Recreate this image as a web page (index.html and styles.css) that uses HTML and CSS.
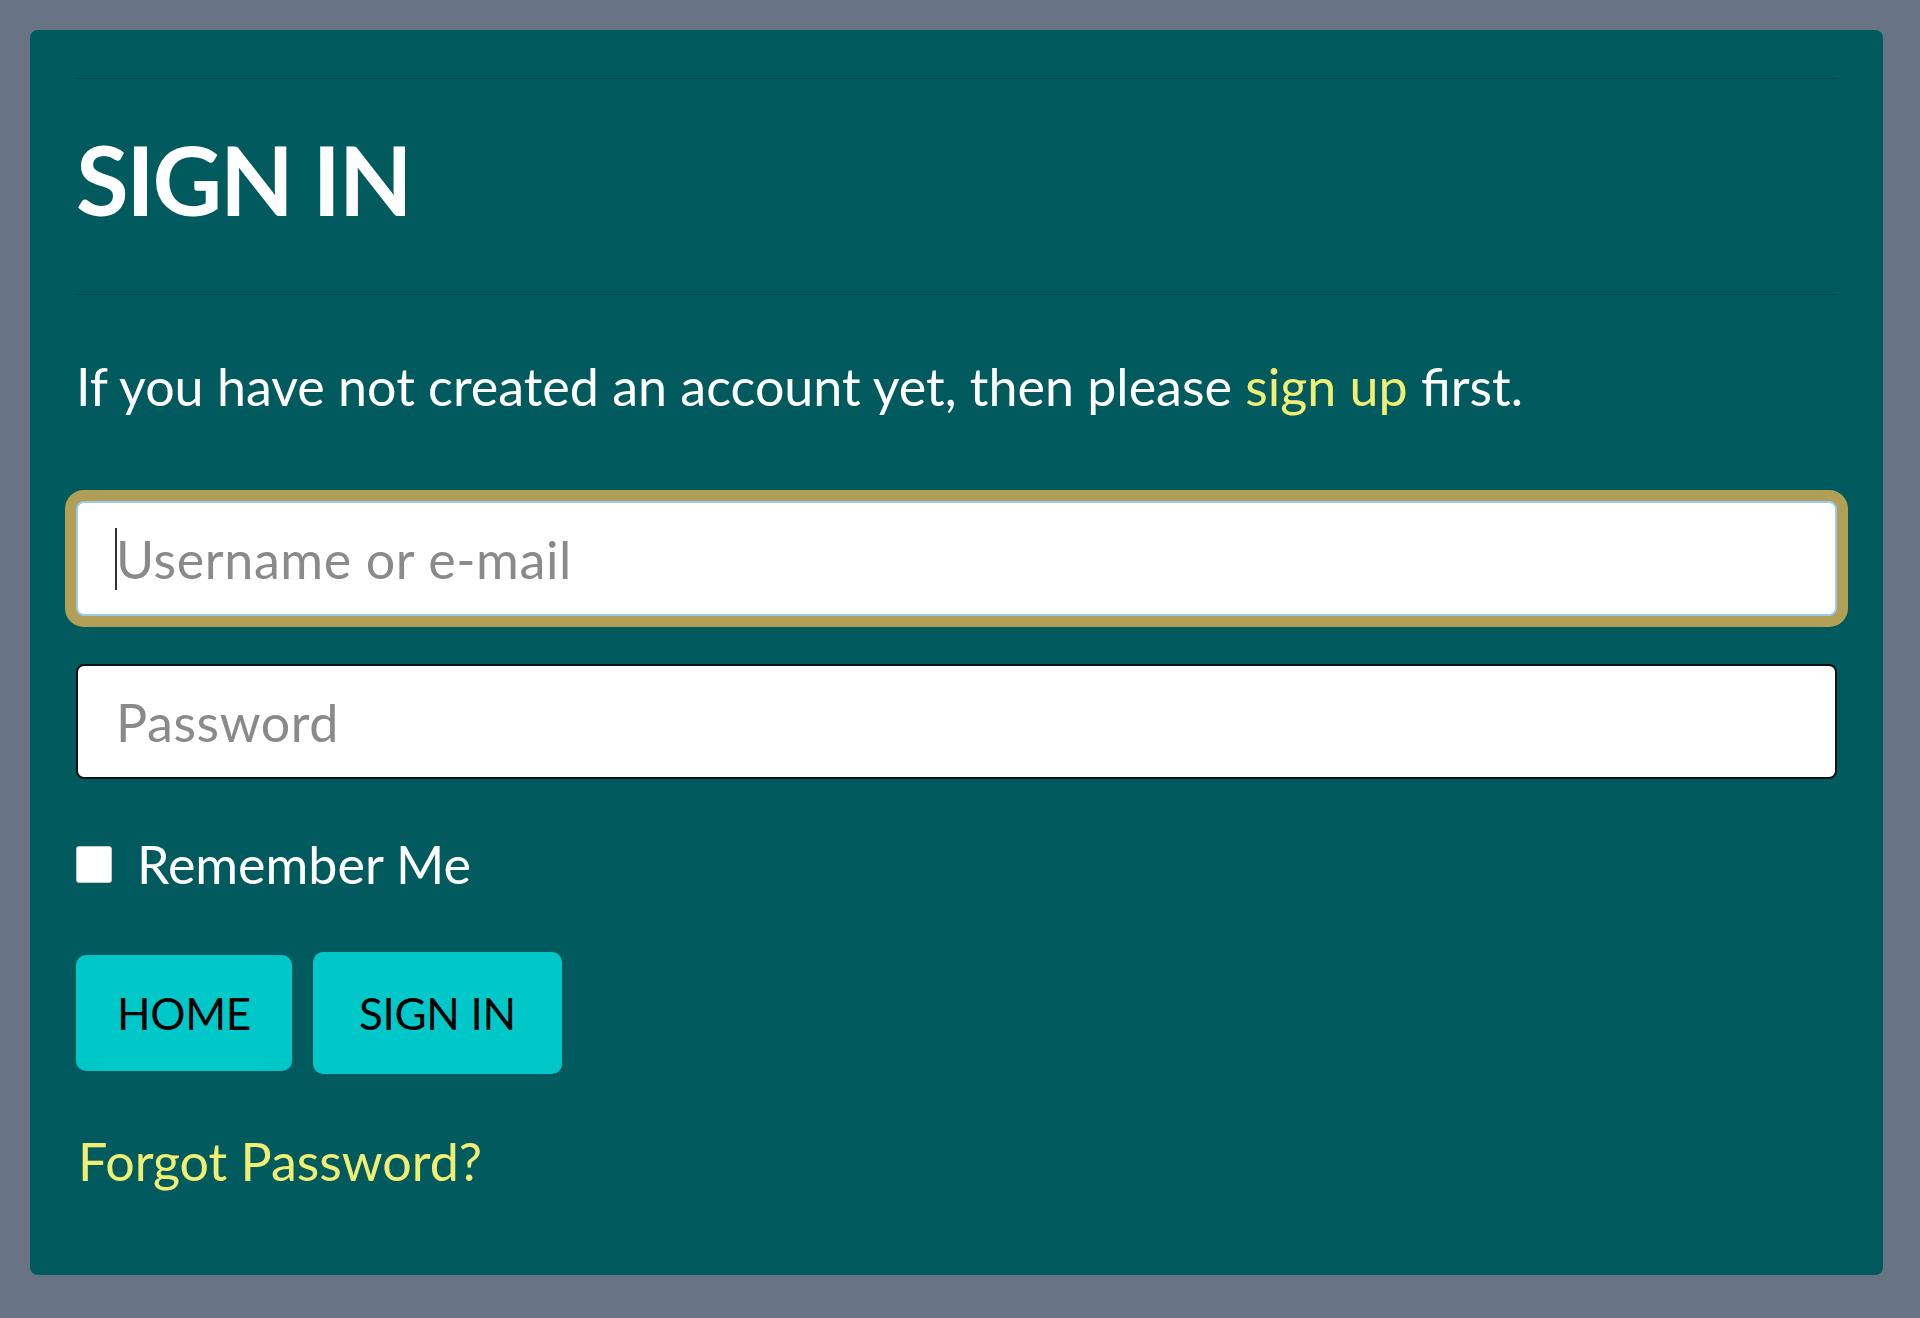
FILE: index.html
```html
<!DOCTYPE html>
<html lang="en">
<head>
<meta charset="utf-8">
<title>Sign In</title>
<link rel="stylesheet" href="styles.css">
</head>
<body>
<main class="card">
  <hr class="rule rule-top">
  <h1 class="title">SIGN IN</h1>
  <hr class="rule rule-bottom">
  <p class="intro">If you have not created an account yet, then please <a href="#" class="link">sign up</a> first.</p>
  <form class="form">
    <div class="field field-focused">
      <input class="input input-focused" type="text" placeholder="Username or e-mail">
      <span class="caret"></span>
    </div>
    <div class="field">
      <input class="input" type="password" placeholder="Password">
    </div>
    <label class="remember">
      <input type="checkbox" class="check">
      <span>Remember Me</span>
    </label>
    <div class="actions">
      <a href="#" class="btn btn-home">HOME</a>
      <button type="button" class="btn btn-signin">SIGN IN</button>
    </div>
    <a href="#" class="link forgot">Forgot Password?</a>
  </form>
</main>
</body>
</html>
```

FILE: styles.css
```css
* { box-sizing: border-box; }

html, body {
  margin: 0;
  padding: 0;
}

body {
  background: #687383;
  padding: 30px 37px 43px 30px;
  font-family: Lato, "Open Sans", sans-serif;
  min-height: 1318px;
}

.card {
  background: #005a5e;
  border-radius: 8px;
  padding: 48px 46px 84px 46px;
  color: #ffffff;
}

.rule {
  border: 0;
  height: 1px;
  margin: 0;
  background: #004a4e;
}

.title {
  margin: 42px 0 58px 0;
  font-size: 96px;
  line-height: 1.2;
  font-weight: 700;
  letter-spacing: -2.3px;
}

.intro {
  margin: 61px 0 0 0;
  font-size: 52px;
  line-height: 60px;
  letter-spacing: 0;
}

.link {
  color: #f0ef74;
  text-decoration: none;
}

.form {
  margin-top: 85px;
  display: flex;
  flex-direction: column;
  align-items: flex-start;
}

.field {
  position: relative;
  width: 100%;
}

.field + .field {
  margin-top: 48px;
}

.input {
  display: block;
  width: 100%;
  height: 115px;
  border: 2px solid #111111;
  border-radius: 8px;
  background: #ffffff;
  padding: 0 38px;
  font-family: Lato, "Open Sans", sans-serif;
  font-size: 52px;
  letter-spacing: 0.6px;
  color: #222;
  outline: none;
}

.input::placeholder {
  color: #8a8a8a;
}

.input-focused {
  border: 2px solid #9cc8f2;
  box-shadow: 0 0 0 11px #b09f55;
}

.caret {
  position: absolute;
  left: 39px;
  top: 27px;
  width: 2px;
  height: 62px;
  background: #333333;
}

.remember {
  margin-top: 55px;
  display: flex;
  align-items: center;
  gap: 25px;
  font-size: 52px;
  line-height: 60px;
  letter-spacing: 0;
  color: #ffffff;
}

.check {
  appearance: none;
  -webkit-appearance: none;
  margin: 0;
  width: 36px;
  height: 37px;
  background: #ffffff;
  border: 1px solid #c8c8c8;
  border-radius: 3px;
}

.actions {
  margin-top: 58px;
  display: flex;
  align-items: center;
  gap: 21px;
}

.btn {
  display: inline-flex;
  align-items: center;
  justify-content: center;
  background: #00c8c8;
  color: #000000;
  border: 0;
  border-radius: 10px;
  font-family: Lato, "Open Sans", sans-serif;
  font-size: 44px;
  font-weight: 400;
  text-decoration: none;
  letter-spacing: -0.3px;
}

.btn-home {
  height: 116px;
  padding: 0 41px;
}

.btn-signin {
  height: 122px;
  padding: 0 46px;
}

.forgot {
  margin-top: 57px;
  margin-left: 2px;
  font-size: 52px;
  line-height: 60px;
  letter-spacing: 0;
}
```
